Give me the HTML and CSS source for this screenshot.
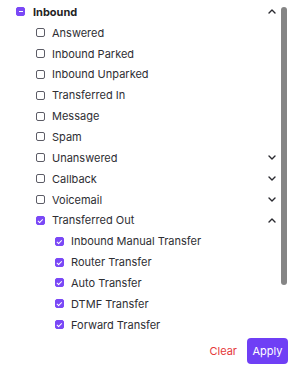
FILE: index.html
```html
<!DOCTYPE html>
<html lang="en">
<head>
  <meta charset="UTF-8">
  <meta name="viewport" content="width=device-width, initial-scale=1.0">
  <title>Call filters</title>
  <link rel="stylesheet" href="styles.css">
</head>
<body>
  <div class="panel">
    <div class="list">
      <div class="row lvl-1 head">
        <span class="box mixed"></span>
        <span class="label">Inbound</span>
        <svg class="chev" viewBox="0 0 8 5"><path d="M1 4 L4 1 L7 4"/></svg>
      </div>
      <div class="row lvl-2"><span class="box"></span><span class="label">Answered</span></div>
      <div class="row lvl-2"><span class="box"></span><span class="label">Inbound Parked</span></div>
      <div class="row lvl-2"><span class="box"></span><span class="label">Inbound Unparked</span></div>
      <div class="row lvl-2"><span class="box"></span><span class="label">Transferred In</span></div>
      <div class="row lvl-2"><span class="box"></span><span class="label">Message</span></div>
      <div class="row lvl-2"><span class="box"></span><span class="label">Spam</span></div>
      <div class="row lvl-2">
        <span class="box"></span><span class="label">Unanswered</span>
        <svg class="chev" viewBox="0 0 8 5"><path d="M1 1 L4 4 L7 1"/></svg>
      </div>
      <div class="row lvl-2">
        <span class="box"></span><span class="label">Callback</span>
        <svg class="chev" viewBox="0 0 8 5"><path d="M1 1 L4 4 L7 1"/></svg>
      </div>
      <div class="row lvl-2">
        <span class="box"></span><span class="label">Voicemail</span>
        <svg class="chev" viewBox="0 0 8 5"><path d="M1 1 L4 4 L7 1"/></svg>
      </div>
      <div class="row lvl-2">
        <span class="box checked"></span><span class="label">Transferred Out</span>
        <svg class="chev" viewBox="0 0 8 5"><path d="M1 4 L4 1 L7 4"/></svg>
      </div>
      <div class="row lvl-3"><span class="box checked"></span><span class="label">Inbound Manual Transfer</span></div>
      <div class="row lvl-3"><span class="box checked"></span><span class="label">Router Transfer</span></div>
      <div class="row lvl-3"><span class="box checked"></span><span class="label">Auto Transfer</span></div>
      <div class="row lvl-3"><span class="box checked"></span><span class="label">DTMF Transfer</span></div>
      <div class="row lvl-3"><span class="box checked"></span><span class="label">Forward Transfer</span></div>
    </div>
    <div class="footer">
      <button class="btn-clear">Clear</button>
      <button class="btn-apply">Apply</button>
    </div>
    <div class="scroll-thumb"></div>
  </div>
</body>
</html>
```

FILE: styles.css
```css
body {
  margin: 0;
  font-family: Inter, "Noto Sans", sans-serif;
  font-size: 11px;
  color: #2e2e33;
  background: #fff;
}
.panel {
  position: relative;
  width: 296px;
  height: 373px;
}
.list {
  padding-top: 1.5px;
  width: 280px;
}
.row {
  display: flex;
  align-items: center;
  height: 20.85px;
}
.lvl-1 { padding-left: 16px; }
.lvl-2 { padding-left: 36px; }
.lvl-3 { padding-left: 55px; }
.head .label {
  font-weight: 700;
  color: #1f1f24;
}
.box {
  box-sizing: border-box;
  width: 9px;
  height: 9px;
  border: 1px solid #5c5c66;
  border-radius: 2px;
  margin-right: 7px;
  flex: none;
  position: relative;
}
.head .box {
  margin-right: 8px;
}
.box.mixed,
.box.checked {
  background: #7a48f6;
  border-color: #7a48f6;
}
.box.mixed::after {
  content: "";
  position: absolute;
  left: 1.5px;
  right: 1.5px;
  top: 3px;
  height: 1px;
  background: #fff;
}
.box.checked::after {
  content: "";
  position: absolute;
  left: 2px;
  top: 1px;
  width: 2px;
  height: 3.5px;
  border: solid #fff;
  border-width: 0 1px 1px 0;
  transform: rotate(45deg);
}
.label {
  flex: 1;
  white-space: nowrap;
}
.chev {
  width: 8px;
  height: 5px;
  margin-right: 4px;
  flex: none;
}
.chev path {
  fill: none;
  stroke: #2a2a30;
  stroke-width: 1.4;
  stroke-linecap: round;
  stroke-linejoin: round;
}
.footer {
  display: flex;
  justify-content: flex-end;
  align-items: center;
  gap: 10px;
  padding: 3px 8px 0 0;
}
.btn-clear {
  border: none;
  background: none;
  padding: 0;
  font: inherit;
  color: #e5383b;
}
.btn-apply {
  border: none;
  background: #6f3ff5;
  color: #fff;
  font: inherit;
  width: 41px;
  height: 26px;
  border-radius: 4px;
  padding: 0;
}
.scroll-thumb {
  position: absolute;
  left: 281px;
  top: 7px;
  width: 6px;
  height: 278px;
  border-radius: 3px;
  background: #858585;
}
```
